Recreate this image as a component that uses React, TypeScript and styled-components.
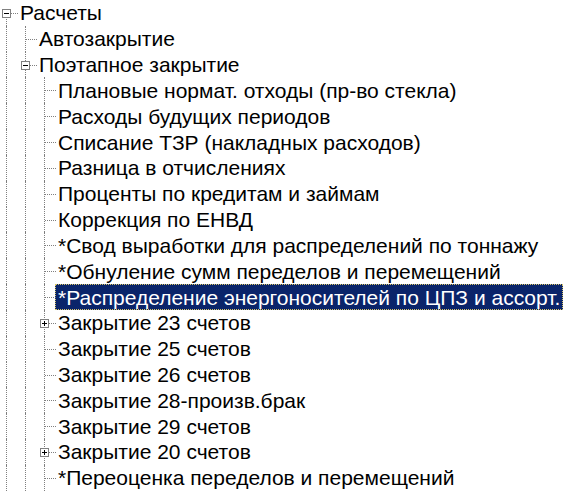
import React from "react";
import styled, { createGlobalStyle } from "styled-components";

const GlobalStyle = createGlobalStyle`
  html, body {
    margin: 0;
    padding: 0;
    background: #ffffff;
    overflow: hidden;
  }
  body {
    font-family: "Liberation Sans", Arial, sans-serif;
  }
`;

const INDENT = 19;
const LINE_X = 6;
const ROW_H = 25.83;
const LINE_COLOR = "#808080";

type BoxKind = "plus" | "minus" | null;

interface Row {
  text: string;
  guides: boolean[];
  hasNext: boolean;
  firstRoot?: boolean;
  box: BoxKind;
  selected?: boolean;
}

const level2: { text: string; box?: BoxKind; selected?: boolean }[] = [
  { text: "Плановые нормат. отходы (пр-во стекла)" },
  { text: "Расходы будущих периодов" },
  { text: "Списание ТЗР (накладных расходов)" },
  { text: "Разница в отчислениях" },
  { text: "Проценты по кредитам и займам" },
  { text: "Коррекция по ЕНВД" },
  { text: "*Свод выработки для распределений по тоннажу" },
  { text: "*Обнуление сумм переделов и перемещений" },
  { text: "*Распределение энергоносителей по ЦПЗ и ассорт.", selected: true },
  { text: "Закрытие 23 счетов", box: "plus" },
  { text: "Закрытие 25 счетов" },
  { text: "Закрытие 26 счетов" },
  { text: "Закрытие 28-произв.брак" },
  { text: "Закрытие 29 счетов" },
  { text: "Закрытие 20 счетов", box: "plus" },
  { text: "*Переоценка переделов и перемещений" },
];

const rows: Row[] = [
  { text: "Расчеты", guides: [], hasNext: true, firstRoot: true, box: "minus" },
  { text: "Автозакрытие", guides: [true], hasNext: true, box: null },
  { text: "Поэтапное закрытие", guides: [true], hasNext: true, box: "minus" },
  ...level2.map((r) => ({
    text: r.text,
    guides: [true, true],
    hasNext: true,
    box: r.box ?? null,
    selected: r.selected,
  })),
];

const Tree = styled.div`
  display: flex;
  flex-direction: column;
  background: #ffffff;
  color: #000000;
  font-size: 21px;
  width: 564px;
  height: 491px;
  overflow: hidden;
`;

const RowLine = styled.div`
  display: flex;
  align-items: stretch;
  height: ${ROW_H}px;
  flex: 0 0 ${ROW_H}px;
`;

type Vertical = "full" | "top" | "bottom" | "none";

const GuideCell = styled.div<{ $vertical: Vertical; $connector?: boolean }>`
  position: relative;
  flex: 0 0 ${INDENT}px;
  width: ${INDENT}px;

  &::before {
    content: "";
    display: ${(p) => (p.$vertical === "none" ? "none" : "block")};
    position: absolute;
    left: ${LINE_X}px;
    top: ${(p) => (p.$vertical === "bottom" ? "50%" : "0")};
    bottom: ${(p) => (p.$vertical === "top" ? "50%" : "0")};
    border-left: 1px dotted ${LINE_COLOR};
  }

  &::after {
    content: "";
    display: ${(p) => (p.$connector ? "block" : "none")};
    position: absolute;
    left: ${LINE_X + 1}px;
    right: 1px;
    top: 50%;
    border-top: 1px dotted ${LINE_COLOR};
  }
`;

const ExpandBox = styled.svg`
  position: absolute;
  left: ${LINE_X - 4}px;
  top: calc(50% - 4px);
  width: 9px;
  height: 9px;
  display: block;
  z-index: 1;
`;

const Label = styled.span<{ $selected?: boolean }>`
  display: flex;
  align-items: center;
  box-sizing: border-box;
  height: 100%;
  margin-left: -2px;
  padding: 0 2px;
  white-space: nowrap;
  line-height: 1;
  background: ${(p) => (p.$selected ? "#0a246a" : "transparent")};
  color: ${(p) => (p.$selected ? "#ffffff" : "#000000")};
  border: 1px dotted ${(p) => (p.$selected ? "#d8c468" : "transparent")};
`;

function Box({ kind }: { kind: "plus" | "minus" }) {
  return (
    <ExpandBox viewBox="0 0 9 9" shapeRendering="crispEdges">
      <rect x="0.5" y="0.5" width="8" height="8" fill="#ffffff" stroke={LINE_COLOR} />
      <line x1="2" y1="4.5" x2="7" y2="4.5" stroke="#000000" />
      {kind === "plus" && <line x1="4.5" y1="2" x2="4.5" y2="7" stroke="#000000" />}
    </ExpandBox>
  );
}

export default function App() {
  return (
    <>
      <GlobalStyle />
      <Tree>
        {rows.map((r, i) => {
          const own: Vertical = r.firstRoot
            ? r.hasNext
              ? "bottom"
              : "none"
            : r.hasNext
            ? "full"
            : "top";
          return (
            <RowLine key={i}>
              {r.guides.map((g, j) => (
                <GuideCell key={j} $vertical={g ? "full" : "none"} />
              ))}
              <GuideCell $vertical={own} $connector>
                {r.box && <Box kind={r.box} />}
              </GuideCell>
              <Label $selected={r.selected}>{r.text}</Label>
            </RowLine>
          );
        })}
      </Tree>
    </>
  );
}
